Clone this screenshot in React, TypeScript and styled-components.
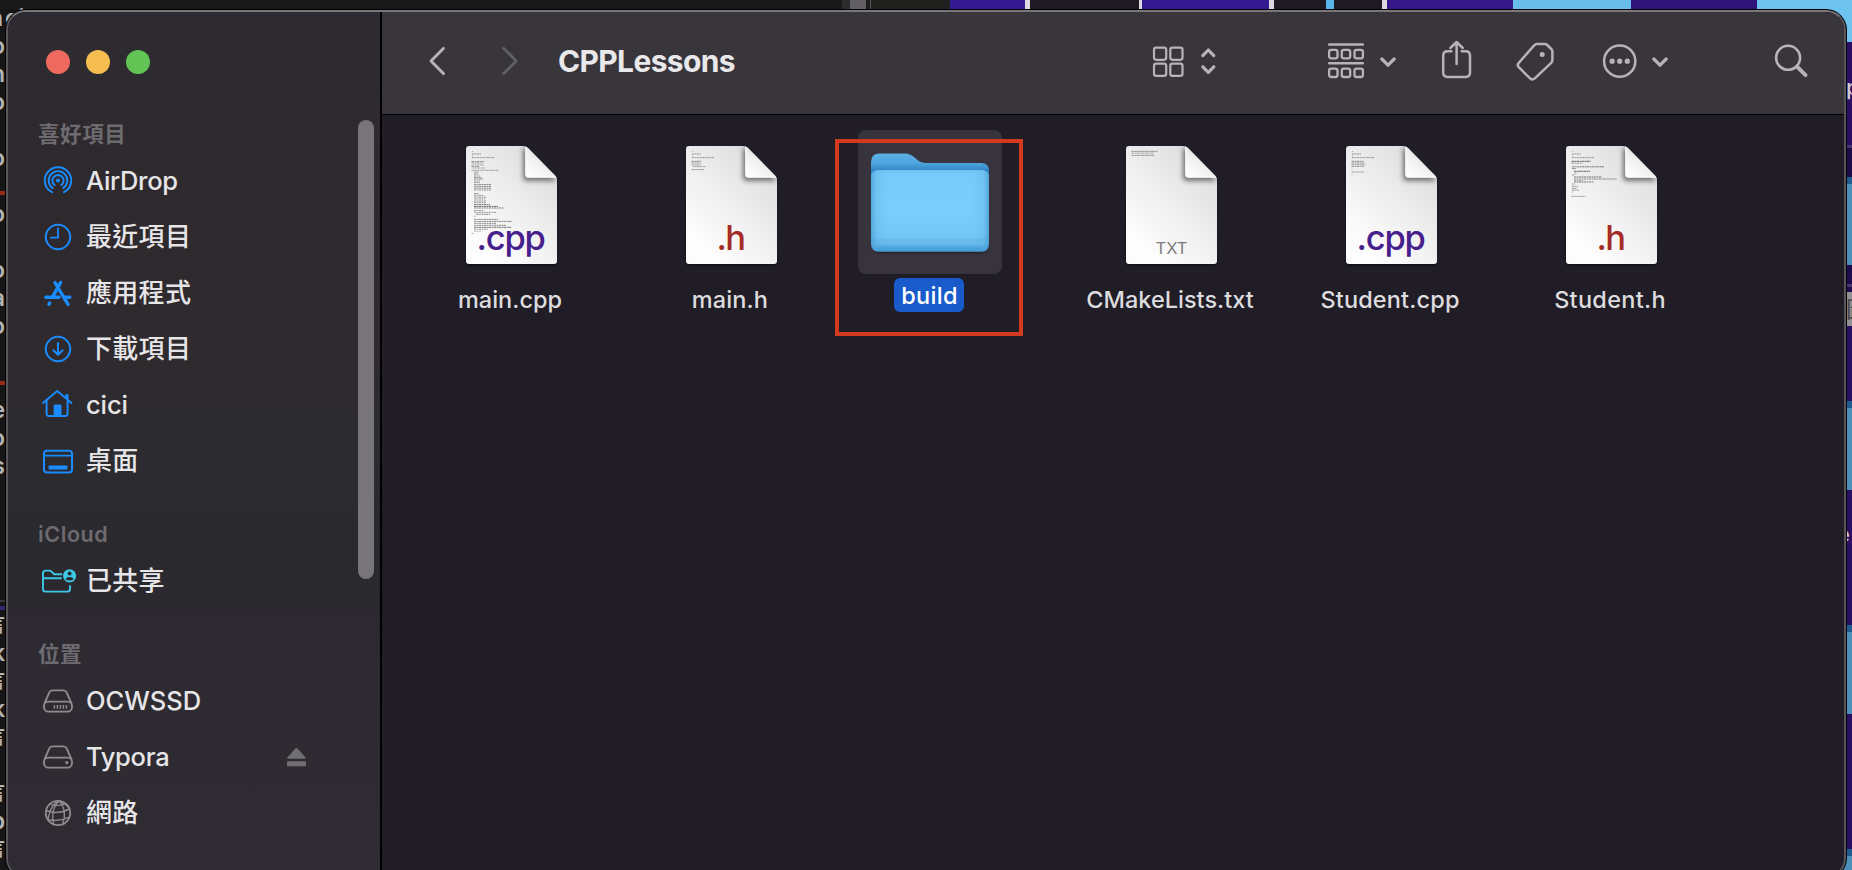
import React from 'react';
import styled, { createGlobalStyle, css } from 'styled-components';

const Global = createGlobalStyle`
  * { box-sizing: border-box; }
  body { margin: 0; background: #161616; overflow: hidden; }
  svg { display: block; flex: none; overflow: visible; }
`;

const uiFont = css`font-family: Inter, "Noto Sans CJK TC", sans-serif;`;

const Desktop = styled.div`
  ${uiFont}
  position: relative;
  width: 1852px;
  height: 870px;
  overflow: hidden;
  background: #161616;
`;

const TopStrip = styled.div`
  display: flex;
  height: 9px;
`;

const Segment = styled.div<{ $w: number; $c: string }>`
  flex: none;
  width: ${p => p.$w}px;
  background: ${p => p.$c};
`;

const Sides = styled.div`
  display: flex;
  justify-content: space-between;
  height: 861px;
`;

const Terminal = styled.div`
  width: 30px;
  margin-top: -5px;
`;

const TermLine = styled.div<{ $wide?: boolean }>`
  display: flex;
  justify-content: flex-end;
  width: 5px;
  height: 28px;
  line-height: 28px;
  font-size: ${p => (p.$wide ? 20 : 23)}px;
  font-weight: 600;
  white-space: pre;
  color: #b4b4b4;
`;

const Spill = styled.span`
  width: 0;
  padding-left: 2px;
`;

const TermRule = styled.div<{ $top: number; $h: number; $bottom: number; $c: string }>`
  width: 6px;
  height: ${p => p.$top + p.$h + p.$bottom}px;
  border: solid #161616;
  border-width: ${p => p.$top}px 0 ${p => p.$bottom}px;
  background: ${p => p.$c};
`;

const DesktopEdge = styled.div`
  width: 26px;
`;

const Slab = styled.div<{ $h: number; $c: string; $pt?: number; $ink?: string }>`
  height: ${p => p.$h}px;
  padding: ${p => p.$pt ?? 0}px 0 0 20px;
  background: ${p => p.$c};
  color: ${p => p.$ink ?? '#d0cbd6'};
  font-size: 22px;
  line-height: 26px;
  font-weight: 500;
  overflow: hidden;
`;

const Pull = styled.span`
  margin-left: -9px;
`;

const Window = styled.div`
  position: absolute;
  left: 6px;
  top: 10px;
  display: flex;
  width: 1840px;
  height: 868px;
  border: 2px solid #58555b;
  border-top-color: #7a777c;
  border-radius: 20px;
  background: #201d27;
  box-shadow: 0 0 0 1px #000;
  overflow: hidden;
`;

const Sidebar = styled.aside`
  display: flex;
  flex: none;
  width: 374px;
  border-right: 2px solid #000;
  background: linear-gradient(180deg, #2d2b31 0%, #2e292d 22%, #2f2a2e 36%, #2c2b2f 50%, #2a292e 62%, #2d2a31 76%, #2e2b32 100%);
`;

const SideMain = styled.div`
  width: 350px;
`;

const Lights = styled.div`
  display: flex;
  gap: 16px;
  padding: 38px 0 0 38px;
  height: 103px;
`;

const Light = styled.span<{ $c: string }>`
  width: 24px;
  height: 24px;
  border-radius: 50%;
  background: ${p => p.$c};
`;

const Group = styled.section`
  margin-bottom: 26px;
`;

const GroupTitle = styled.h2<{ $ls?: number }>`
  margin: 0;
  padding-left: 30px;
  height: 38px;
  line-height: 38px;
  font-size: 21.5px;
  font-weight: 600;
  letter-spacing: ${p => p.$ls ?? 0.4}px;
  color: #6d6a70;
`;

const SideRow = styled.div`
  display: flex;
  align-items: center;
  height: 56px;
  padding: 0 52px 0 30px;
  color: #e6e5e7;
`;

const SideLabel = styled.span<{ $ls?: number; $cjk?: boolean }>`
  flex: 1;
  padding: 0 0 ${p => (p.$cjk ? 5 : 1.5)}px 8px;
  font-size: ${p => (p.$cjk ? 26 : 25.5)}px;
  font-weight: 500;
  white-space: nowrap;
  letter-spacing: ${p => p.$ls ?? (p.$cjk ? 0.3 : 0)}px;
`;

const ScrollThumb = styled.div`
  width: 16px;
  height: 459px;
  margin-top: 108px;
  border-radius: 8px;
  background: #78757a;
`;

const Pane = styled.main`
  flex: 1;
`;

const Toolbar = styled.header`
  display: flex;
  align-items: center;
  height: 103px;
  border-bottom: 1px solid #000;
  background: #38353b;
`;

const ToolButton = styled.span<{ $ml: number; $dim?: boolean }>`
  margin-left: ${p => p.$ml}px;
  color: ${p => (p.$dim ? '#615e65' : '#b7b3ba')};
`;

const Title = styled.h1`
  margin: 0 0 0 40px;
  width: 178px;
  line-height: 50px;
  padding-bottom: 4px;
  font-size: 30px;
  font-weight: 700;
  letter-spacing: -0.65px;
  color: #e9e8ea;
  white-space: nowrap;
`;

const Files = styled.div`
  display: grid;
  grid-template-columns: repeat(6, 220px);
  padding: 19px 0 0 19.5px;
`;

const FileCell = styled.div<{ $moved?: boolean }>`
  display: flex;
  flex-direction: column;
  align-items: center;
  ${p => p.$moved && 'margin: -4px 0 0 -43px;'}
`;

const IconBox = styled.div<{ $selected?: boolean }>`
  display: flex;
  justify-content: center;
  width: 144px;
  height: 144px;
  margin-bottom: ${p => (p.$selected ? 4 : 5)}px;
  padding-top: 12px;
  border-radius: 8px;
  background: ${p => (p.$selected ? '#37343d' : 'transparent')};
`;

const FileName = styled.span<{ $selected?: boolean; $ls?: number }>`
  height: 34px;
  line-height: ${p => (p.$selected ? 35 : 34)}px;
  margin-right: 2px;
  padding: 0 ${p => (p.$selected ? 6 : 8)}px 0 7px;
  border-radius: 6px;
  font-size: 23.5px;
  font-weight: 500;
  white-space: nowrap;
  letter-spacing: ${p => p.$ls ?? 0}px;
  color: ${p => (p.$selected ? '#ffffff' : '#dddcde')};
  background: ${p => (p.$selected ? '#195bca' : 'transparent')};
`;

const Marker = styled.div`
  position: absolute;
  left: 835px;
  top: 139px;
  width: 188px;
  height: 197px;
  border: 4px solid #d3391f;
`;

const BLUE = '#1a8cff';
const GREY = '#8e8b90';

const SideIcon = ({ c = BLUE, w = 2, children }: { c?: string; w?: number; children: React.ReactNode }) => (
  <svg width="40" height="40" viewBox="0 0 40 40" fill="none" stroke={c} strokeWidth={w} strokeLinecap="round" strokeLinejoin="round">
    {children}
  </svg>
);

const AirDropIcon = () => (
  <SideIcon w={1.9}>
    <path d="M14 31.2A13.2 13.2 0 1 1 26 31.2" />
    <path d="M14.7 27.1A9.3 9.3 0 1 1 25.3 27.1" />
    <path d="M16.6 24.1A5.6 5.6 0 1 1 23.4 24.1" />
    <circle cx="20" cy="19.6" r="2" fill={BLUE} stroke="none" />
  </SideIcon>
);

const ClockIcon = () => (
  <SideIcon><circle cx="20" cy="20" r="12.2" /><path d="M20 11.5V20.7H12.8" strokeWidth="1.8" /></SideIcon>
);

const AppsIcon = () => (
  <SideIcon w={3.4}>
    <path d="M17 9.6L30 31.4M22.6 9.6L14.2 24.3M11.6 30.1L11 31.2M7.8 24.3H21M27.4 24.3H31.8" />
  </SideIcon>
);

const DownloadIcon = () => (
  <SideIcon><circle cx="20" cy="20" r="12.2" /><path d="M20 14V25.5M15.4 21.2L20 25.7L24.6 21.2" /></SideIcon>
);

const HomeIcon = () => (
  <SideIcon w={1.9}>
    <path d="M5 18L19.2 6L33.5 18M8.6 15.5V28.5Q8.6 31 11 31H27.2Q29.6 31 29.6 28.5V15.5" />
    <path d="M28.9 9.2V14" strokeWidth="3.2" strokeLinecap="butt" />
    <path d="M16.6 31V20.5H22.5V31Z" fill={BLUE} />
  </SideIcon>
);

const DesktopIcon = () => (
  <SideIcon>
    <rect x="6" y="9.8" width="28" height="21.6" rx="3" />
    <path d="M6 14.6H34" strokeWidth="1.6" />
    <rect x="10.6" y="24.6" width="18.8" height="4" rx=".6" fill={BLUE} stroke="none" />
  </SideIcon>
);

const SharedIcon = () => (
  <SideIcon c="#3cc9e6">
    <path d="M23.5 13.2H16L13.4 10.4Q12.4 9.6 11 9.6H7.6Q5 9.6 5 12.2V28Q5 30.6 7.6 30.6H29.4Q32 30.6 32 28V25M5 17.2H23" strokeWidth="1.9" />
    <circle cx="31.6" cy="14.8" r="6.6" fill="#3cc9e6" stroke="none" />
    <circle cx="31.6" cy="12.6" r="2" fill="#2a292e" stroke="none" />
    <path d="M27.8 18.4Q28.2 16 31.6 16T35.4 18.4Q33.8 19.4 31.6 19.4T27.8 18.4Z" fill="#2a292e" stroke="none" />
  </SideIcon>
);

const DriveIcon = ({ vents }: { vents?: boolean }) => (
  <SideIcon c={GREY} w={1.9}>
    <path d="M6.6 22.2L11.4 11.4Q12.2 9.4 14.4 9.4H25.6Q27.8 9.4 28.6 11.4L33.4 22.2" />
    <rect x="6" y="20.6" width="28" height="10" rx="4.4" />
    {vents ? (
      <path d="M16.4 24V27.8M19.4 24V27.8M22.4 24V27.8M25.4 24V27.8M28.4 24V27.8" strokeWidth="1.4" strokeLinecap="butt" />
    ) : (
      <circle cx="28.8" cy="25.6" r="1.6" fill={GREY} stroke="none" />
    )}
  </SideIcon>
);

const GlobeIcon = () => (
  <SideIcon c={GREY} w={1.6}>
    <circle cx="20" cy="20" r="12.2" strokeWidth="1.8" />
    <path d="M21.5 8Q12.5 15 15.5 31.4M21.5 8Q29.5 17 24.8 31M21.5 8Q13 10 10 26.8M21.5 8Q30 12 31.6 16M8.2 17.5Q19 22 31.6 16M9.8 26.8Q21 29 31.4 24.2M12 11Q18 14.4 27.6 10.6" strokeWidth="1.4" />
  </SideIcon>
);

const EjectIcon = () => (
  <svg width="19" height="19" viewBox="0 0 19 19" fill="#706d73">
    <path d="M8.4.6Q9.5-.4 10.6.6L18.6 9.4Q19.2 10.8 17.6 10.8H1.4Q-.2 10.8.4 9.4Z" />
    <rect x="0" y="13.2" width="19" height="5" rx="1" />
  </svg>
);

const ToolSvg = ({ w, children }: { w: number; children: React.ReactNode }) => (
  <svg width={w} height="50" viewBox={`0 0 ${w} 50`} fill="none" stroke="currentColor" strokeWidth="2.5" strokeLinecap="round" strokeLinejoin="round">
    {children}
  </svg>
);

const BackIcon = () => (
  <ToolSvg w={18}><path d="M15.4 10.4L3 23L15.4 35.6" strokeWidth="2.9" /></ToolSvg>
);

const ForwardIcon = () => (
  <ToolSvg w={18}><path d="M3.8 10.4L16.2 23L3.8 35.6" strokeWidth="2.9" /></ToolSvg>
);

const ViewIcon = () => (
  <ToolSvg w={64}>
    {[1, 17.3].map(x => [9.6, 25.7].map(y => <rect key={`${x}-${y}`} x={x} y={y} width="12.2" height="12.2" rx="2.2" strokeWidth="2.2" />))}
    <path d="M49.8 17.6L55.3 12L60.8 17.6M49.8 28.8L55.3 34.4L60.8 28.8" strokeWidth="3.2" />
  </ToolSvg>
);

const GroupIcon = () => (
  <ToolSvg w={68}>
    <path d="M1.2 6.5H34.8M1.2 25.3H34.8" />
    {[1.1, 13.8, 26.5].map(x => [11.9, 30.6].map(y => <rect key={`${x}-${y}`} x={x} y={y} width="8.4" height="8.4" rx="2" strokeWidth="2.3" />))}
    <path d="M53.8 21L60 27.2L66.2 21" strokeWidth="3.2" />
  </ToolSvg>
);

const ShareIcon = () => (
  <ToolSvg w={30}>
    <path d="M9.4 13.2H5.6Q1.2 13.2 1.2 17.6V34.6Q1.2 39 5.6 39H23.6Q28 39 28 34.6V17.6Q28 13.2 23.6 13.2H19.8" />
    <path d="M14.6 26V4.4M8.4 10L14.6 4L20.8 10" />
  </ToolSvg>
);

const TagIcon = () => (
  <ToolSvg w={38}>
    <path d="M20 6H27.800Q29.200 6 30.200 7L34.400 11.200Q35.400 12.200 35.400 13.600V22Q35.400 23.600 34.200 24.800L17.800 40.400Q15.200 42.600 12.800 40.200L1.800 29.200Q-.2 27 1.800 24.800L17.400 7.200Q18.400 6 20 6Z" />
    <circle cx="25.2" cy="16.4" r="2.5" fill="currentColor" stroke="none" />
  </ToolSvg>
);

const MoreIcon = () => (
  <ToolSvg w={66}>
    <circle cx="16.7" cy="23.2" r="15.6" />
    <g fill="currentColor" stroke="none"><circle cx="9.1" cy="23.2" r="2.6" /><circle cx="16.7" cy="23.2" r="2.6" /><circle cx="24.3" cy="23.2" r="2.6" /></g>
    <path d="M50.8 21L57 27.2L63.2 21" strokeWidth="3.2" />
  </ToolSvg>
);

const SearchIcon = () => (
  <ToolSvg w={34}>
    <circle cx="13.1" cy="19.8" r="12" strokeWidth="2.6" />
    <path d="M22 28.6L30.6 37.2" strokeWidth="3.8" />
  </ToolSvg>
);

type Line = [number, number, number, number];

const headLines: Line[] = [[6, 5.5, 1, .35], [6, 8, 9, .5], [6, 10, 1, .35], [6, 11.6, 22, .45]];
const previews: Record<string, Line[]> = {
  'main.cpp': [
    ...headLines,
    [5.5, 15.5, 13, .5], [5.5, 17, 11, .5], [5.5, 19, 13, .4], [5.5, 20.6, 8, .5], [7, 22, 12, .4], [5.5, 24.3, 27, .45],
    [8, 26, 5, .5], [8, 28, 5, .6], [8, 30, 6, .5], [8, 31.5, 8, .5], [8, 33, 9, .6], [8, 35, 6, .5], [8, 36.6, 6, .5],
    [8, 38.6, 17, .6], [8, 40.4, 17, .6], [8, 42.2, 17, .6], [8, 44, 17, .5],
    [8, 47.6, 5, .6], [8, 49.4, 10, .5], [8, 51.2, 13, .5], [8, 53, 11, .5], [8, 55, 12, .5], [8, 56.7, 12, .5],
    [8, 58.6, 16, .7], [8, 60.4, 24, .8], [8, 62, 30, .6], [8, 64.5, 10, .5], [8, 66.4, 22, .5], [10, 68.3, 14, .6], [8, 70.2, 2, .4],
    [8, 73.4, 24, .6], [8, 75.4, 38, .6], [8, 77.3, 22, .6], [8, 79.3, 32, .6], [8, 81.3, 37, .75], [8, 83.2, 14, .5], [8, 85.2, 7, .4], [5.5, 87.5, 2, .4],
  ],
  'main.h': [...headLines, [5.5, 15.3, 10, .55], [5.5, 17, 9, .5], [5.5, 19, 10, .45], [7, 20.6, 13, .4], [5.5, 23.6, 13, .5]],
  'CMakeLists.txt': [[5.5, 5.4, 26, .5], [5.5, 7.2, 22, .4], [5.5, 9.4, 23, .5]],
  'Student.cpp': [...headLines, [5.5, 15.3, 12, .55], [5.5, 17, 13, .5], [5.5, 18.8, 14, .5], [5.5, 20.5, 13, .45], [5.5, 23, 1, .3], [5.5, 26, 13, .45], [5.5, 28.5, 1, .3]],
  'Student.h': [
    ...headLines,
    [5.5, 15.3, 19, .8], [5.5, 17.2, 11, .45], [6, 20.8, 32, .65], [6, 22.6, 4, .6], [8, 25.3, 16, .8], [8, 27.2, 3, .4],
    [6, 29, 3, .4], [8, 31, 28, .7], [8, 33, 43, .55], [8, 34.6, 9, .4], [8, 36, 20, .65], [6, 38, 3, .5], [6, 40.4, 6, .5], [6, 42.4, 5, .5], [6, 44.2, 7, .5], [6, 46, 1, .4], [5.5, 50.4, 14, .45],
  ],
};

interface Badge { text: string; color: string; size: number; weight: number; x: number; y: number; ls: number }
const CPP: Badge = { text: '.cpp', color: '#48208c', size: 34.5, weight: 500, x: 44.6, y: 104, ls: -1.2 };
const H: Badge = { text: '.h', color: '#a42c25', size: 34.5, weight: 500, x: 44.4, y: 104, ls: -1.6 };
const TXT: Badge = { text: 'TXT', color: '#7c7c7c', size: 16.5, weight: 400, x: 45.5, y: 108, ls: 0 };

const SHEET = 'M3 0H57Q60 0 62 2L89 29.5Q91 31.5 91 34V115Q91 118 88 118H3Q0 118 0 115V3Q0 0 3 0Z';

const DocIcon = ({ name, badge }: { name: string; badge: Badge }) => (
  <svg width="91" height="118" viewBox="0 0 91 118">
    <defs>
      <linearGradient id="sheet" x1="0.85" y1="0.1" x2="0.25" y2="0.9">
        <stop offset="0" stopColor="#dedede" /><stop offset="0.5" stopColor="#eeeeee" /><stop offset="1" stopColor="#fdfdfd" />
      </linearGradient>
      <linearGradient id="fold" x1="0.65" y1="0.35" x2="0.1" y2="0.95">
        <stop offset="0" stopColor="#d9d9d9" /><stop offset="0.4" stopColor="#f1f1f1" /><stop offset="1" stopColor="#ffffff" />
      </linearGradient>
      <filter id="soft" x="-40%" y="-40%" width="180%" height="180%"><feGaussianBlur stdDeviation="2.6" /></filter>
      <filter id="edge" x="-10%" y="-10%" width="120%" height="120%"><feGaussianBlur stdDeviation="1.2" /></filter>
      <clipPath id="sheetClip"><path d={SHEET} /></clipPath>
    </defs>
    <path d={SHEET} transform="translate(0 1.5)" fill="#000" opacity=".5" filter="url(#edge)" />
    <g clipPath="url(#sheetClip)">
      <rect width="91" height="118" fill="url(#sheet)" />
      {previews[name].map(([x, y, w, o], i) => (
        <path key={i} d={`M${x} ${y}h${w}`} stroke="#222" strokeWidth="1" strokeDasharray="2.6 .5 1.4 .4" opacity={o * 0.85} />
      ))}
      <path d="M57 2V31Q57 35 61 35H91L60 2Z" fill="#000" opacity=".5" filter="url(#soft)" />
      <path d="M59.4 0V28.4Q59.4 31.6 62.6 31.6H91V0Z" fill="url(#fold)" />
      <path d="M59.9 1V28.4Q59.9 31.1 62.6 31.1H90" fill="none" stroke="#fff" strokeWidth="1" />
    </g>
    <text x={badge.x} y={badge.y} textAnchor="middle" fontFamily="Inter, sans-serif" fontSize={badge.size} fontWeight={badge.weight} letterSpacing={badge.ls} fill={badge.color}>
      {badge.text}
    </text>
  </svg>
);

const FRONT = 'M0 36Q0 28 8 28H110Q118 28 118 36V101Q118 109.7 109.5 109.7H8.5Q0 109.7 0 101Z';

const FolderIcon = () => (
  <svg width="118" height="118" viewBox="0 0 118 118">
    <defs>
      <linearGradient id="back" x1="0" y1="0" x2="0" y2="1">
        <stop offset="0" stopColor="#5bb0e4" /><stop offset=".2" stopColor="#4fa5de" /><stop offset=".34" stopColor="#3387c8" /><stop offset="1" stopColor="#3a8fcf" />
      </linearGradient>
      <linearGradient id="front" x1="0" y1="0" x2="0" y2="1">
        <stop offset="0" stopColor="#6fc3f1" /><stop offset=".06" stopColor="#77cbf8" /><stop offset=".5" stopColor="#7bcefb" /><stop offset=".82" stopColor="#74c7f5" />
        <stop offset=".86" stopColor="#66b9ea" /><stop offset=".89" stopColor="#6bbdee" /><stop offset=".92" stopColor="#5fb3e6" /><stop offset=".95" stopColor="#4ba5dd" /><stop offset="1" stopColor="#459dd6" />
      </linearGradient>
      <linearGradient id="sides" x1="0" y1="0" x2="1" y2="0">
        <stop offset="0" stopColor="#3f97d2" stopOpacity=".7" /><stop offset=".05" stopColor="#55abe0" stopOpacity=".25" /><stop offset=".14" stopColor="#55abe0" stopOpacity="0" />
        <stop offset=".86" stopColor="#55abe0" stopOpacity="0" /><stop offset=".95" stopColor="#55abe0" stopOpacity=".25" /><stop offset="1" stopColor="#3f97d2" stopOpacity=".7" />
      </linearGradient>
      <filter id="drop" x="-20%" y="-20%" width="140%" height="140%"><feGaussianBlur stdDeviation="1.6" /></filter>
    </defs>
    <rect x="2" y="30" width="114" height="80.5" rx="8" fill="#000" opacity=".55" filter="url(#drop)" />
    <path d="M0 20Q0 11.4 8.5 11.4H34Q39 11.4 43 15L47 18.5Q50.5 21 55 21H110Q118 21 118 29V60H0Z" fill="url(#back)" />
    <path d={FRONT} fill="url(#front)" />
    <path d={FRONT} fill="url(#sides)" />
  </svg>
);

const topSegments: [number, string][] = [
  [842, '#191919'], [8, '#2c2b2e'], [16, '#636065'], [4, '#1e1e1f'], [1, '#555'], [79, '#20201f'],
  [75, '#331a90'], [5, '#dcdae0'], [109, '#1d1a24'], [3, '#dcdae0'], [127, '#341a91'], [5, '#dcdae0'],
  [52, '#1d1a24'], [8, '#58b6e8'], [48, '#1d1a24'], [5, '#dcdae0'], [126, '#37188a'], [118, '#69bde9'], [126, '#2e1477'], [95, '#6ec2ee'],
];

const upperLines = ['o', 'n', 'o', ' ', 'o'];
const middleLines = ['o', ' ', 'o', 'a', 'o', ' '];
const lowerLines = ['e', 'o', 's'];
const logLines = ['言', 'k', '言', 'k', '言', ' ', '言', 'p', '言'];

const files: { name: string; badge: Badge; ls: number }[] = [
  { name: 'main.cpp', badge: CPP, ls: 0 },
  { name: 'main.h', badge: H, ls: 0.12 },
  { name: 'CMakeLists.txt', badge: TXT, ls: 0 },
  { name: 'Student.cpp', badge: CPP, ls: 0.15 },
  { name: 'Student.h', badge: H, ls: 0.3 },
];

const File = ({ name, badge, ls }: { name: string; badge: Badge; ls: number }) => (
  <FileCell>
    <IconBox><DocIcon name={name} badge={badge} /></IconBox>
    <FileName $ls={ls}>{name}</FileName>
  </FileCell>
);

const Lines = ({ items }: { items: string[] }) => (
  <>{items.map((t, i) => <TermLine key={i} $wide={t === '言'}>{t}</TermLine>)}</>
);

export default function App() {
  return (
    <>
      <Global />
      <Desktop>
        <TopStrip>{topSegments.map(([w, c], i) => <Segment key={i} $w={w} $c={c} />)}</TopStrip>
        <Sides>
          <Terminal>
            <TermLine>n<Spill>ci</Spill></TermLine>
            <Lines items={upperLines} />
            <TermRule $top={19} $h={4} $bottom={5} $c="#9c2a17" />
            <Lines items={middleLines} />
            <TermRule $top={13} $h={4} $bottom={11} $c="#9c2a17" />
            <Lines items={lowerLines} />
            <TermRule $top={120} $h={2} $bottom={4} $c="#3b3b3c" />
            <TermRule $top={0} $h={4} $bottom={1} $c="#3b2577" />
            <Lines items={logLines} />
          </Terminal>
          <DesktopEdge>
            <Slab $h={33} $c="#6ec2ee" />
            <Slab $h={103} $c="#2a0e63" $pt={32}>p</Slab>
            <Slab $h={3} $c="#49366f" />
            <Slab $h={29} $c="#1c0b47" />
            <Slab $h={7} $c="#215c90" />
            <Slab $h={81} $c="#4c90b9" />
            <Slab $h={19} $c="#1e0b4b" />
            <Slab $h={3} $c="#49366f" />
            <Slab $h={5} $c="#1e0b4b" />
            <Slab $h={34} $c="#908f91" $pt={4} $ink="#4a494b">圖</Slab>
            <Slab $h={75} $c="#2a1062" />
            <Slab $h={7} $c="#215c90" />
            <Slab $h={82} $c="#4c90b9" />
            <Slab $h={135} $c="#2a1062" $pt={31}><Pull>e</Pull></Slab>
            <Slab $h={7} $c="#215c90" />
            <Slab $h={82} $c="#4c90b9" />
            <Slab $h={135} $c="#2a1062" />
            <Slab $h={7} $c="#215c90" />
            <Slab $h={14} $c="#4c90b9" />
          </DesktopEdge>
        </Sides>
        <Window>
          <Sidebar>
            <SideMain>
              <Lights><Light $c="#ee6a5f" /><Light $c="#f5bd4f" /><Light $c="#61c454" /></Lights>
              <Group>
                <GroupTitle $ls={0.6}>喜好項目</GroupTitle>
                <SideRow><AirDropIcon /><SideLabel $ls={-0.3}>AirDrop</SideLabel></SideRow>
                <SideRow><ClockIcon /><SideLabel $cjk>最近項目</SideLabel></SideRow>
                <SideRow><AppsIcon /><SideLabel $cjk>應用程式</SideLabel></SideRow>
                <SideRow><DownloadIcon /><SideLabel $cjk>下載項目</SideLabel></SideRow>
                <SideRow><HomeIcon /><SideLabel $ls={-0.1}>cici</SideLabel></SideRow>
                <SideRow><DesktopIcon /><SideLabel $cjk>桌面</SideLabel></SideRow>
              </Group>
              <Group>
                <GroupTitle $ls={0.6}>iCloud</GroupTitle>
                <SideRow><SharedIcon /><SideLabel $cjk>已共享</SideLabel></SideRow>
              </Group>
              <Group>
                <GroupTitle>位置</GroupTitle>
                <SideRow><DriveIcon vents /><SideLabel>OCWSSD</SideLabel></SideRow>
                <SideRow><DriveIcon /><SideLabel $ls={-0.3}>Typora</SideLabel><EjectIcon /></SideRow>
                <SideRow><GlobeIcon /><SideLabel $cjk>網路</SideLabel></SideRow>
              </Group>
            </SideMain>
            <ScrollThumb />
          </Sidebar>
          <Pane>
            <Toolbar>
              <ToolButton $ml={46}><BackIcon /></ToolButton>
              <ToolButton $ml={54} $dim><ForwardIcon /></ToolButton>
              <Title>CPPLessons</Title>
              <ToolButton $ml={417}><ViewIcon /></ToolButton>
              <ToolButton $ml={111}><GroupIcon /></ToolButton>
              <ToolButton $ml={46}><ShareIcon /></ToolButton>
              <ToolButton $ml={45}><TagIcon /></ToolButton>
              <ToolButton $ml={48}><MoreIcon /></ToolButton>
              <ToolButton $ml={106}><SearchIcon /></ToolButton>
            </Toolbar>
            <Files>
              {files.slice(0, 2).map(f => <File key={f.name} {...f} />)}
              <FileCell $moved>
                <IconBox $selected><FolderIcon /></IconBox>
                <FileName $selected $ls={0.3}>build</FileName>
              </FileCell>
              {files.slice(2).map(f => <File key={f.name} {...f} />)}
            </Files>
          </Pane>
        </Window>
        <Marker />
      </Desktop>
    </>
  );
}
